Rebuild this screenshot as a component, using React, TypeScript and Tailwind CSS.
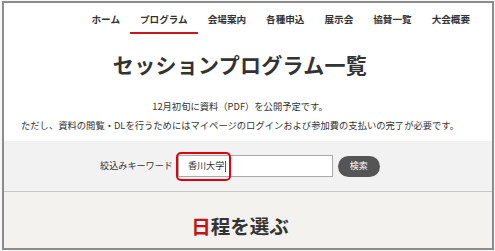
import React from "react";

const navItems = ["ホーム", "プログラム", "会場案内", "各種申込", "展示会", "協賛一覧", "大会概要"];

export default function App() {
  return (
    <div
      className="w-[495px] h-[251px] bg-[#f7f7f7] overflow-hidden"
      style={{ fontFamily: '"Noto Sans CJK JP", "Noto Sans", sans-serif' }}
    >
      <div className="ml-[2px] mt-[1px] w-[492px] h-[249px] border-2 border-[#8c8c8c] bg-white flex flex-col overflow-hidden">
        {/* nav */}
        <div className="flex justify-end pr-[12px] h-[31px] shrink-0">
          {navItems.map((item, i) => (
            <div
              key={item}
              className={
                "h-full flex items-center pt-[3px] px-[10px] text-[9.6px] font-bold text-[#333] border-b-2 " +
                (i === 1 ? "border-[#c9171e]" : "border-transparent")
              }
            >
              {item}
            </div>
          ))}
        </div>
        {/* title */}
        <div className="mt-[9px] h-[44px] pr-[16px] flex items-center justify-center text-[21px] font-bold text-[#333] tracking-[0.3px]">
          セッションプログラム一覧
        </div>
        {/* notes */}
        <div className="mt-[10px] pr-[16px] text-center text-[9.3px] leading-[19px] text-[#333]">
          <p>12月初旬に資料（PDF）を公開予定です。</p>
          <p>ただし、資料の閲覧・DLを行うためにはマイページのログインおよび参加費の支払いの完了が必要です。</p>
        </div>
        {/* search band */}
        <div className="mt-[6px] h-[51px] shrink-0 pr-[16px] bg-[#f2f2f2] border-b border-[#c8c8c8] flex items-center justify-center">
          <span className="text-[9.1px] text-[#333] mr-[5px]">絞込みキーワード</span>
          <div className="relative">
            <div className="w-[155px] h-[22px] border border-[#a9a9a9] bg-white flex items-center pl-[9px] text-[9.1px] text-[#333]">
              香川大学<span className="ml-[1px] w-px h-[11px] bg-[#555]" />
            </div>
            <div className="absolute left-[-2px] top-[-3px] w-[55px] h-[29px] border-2 border-[#e00012] rounded-[5px]" />
          </div>
          <button className="ml-[5px] w-[42px] h-[21px] rounded-full bg-[#555555] text-white text-[9px] flex items-center justify-center">
            検索
          </button>
        </div>
        {/* day section */}
        <div className="flex-1 pr-[16px] bg-[#f4f2ee] flex items-start justify-center pt-[24px]">
          <div className="text-[19.5px] font-bold text-[#333] leading-none">
            <span className="text-[#c0141c]">日</span>程を選ぶ
          </div>
        </div>
      </div>
    </div>
  );
}
